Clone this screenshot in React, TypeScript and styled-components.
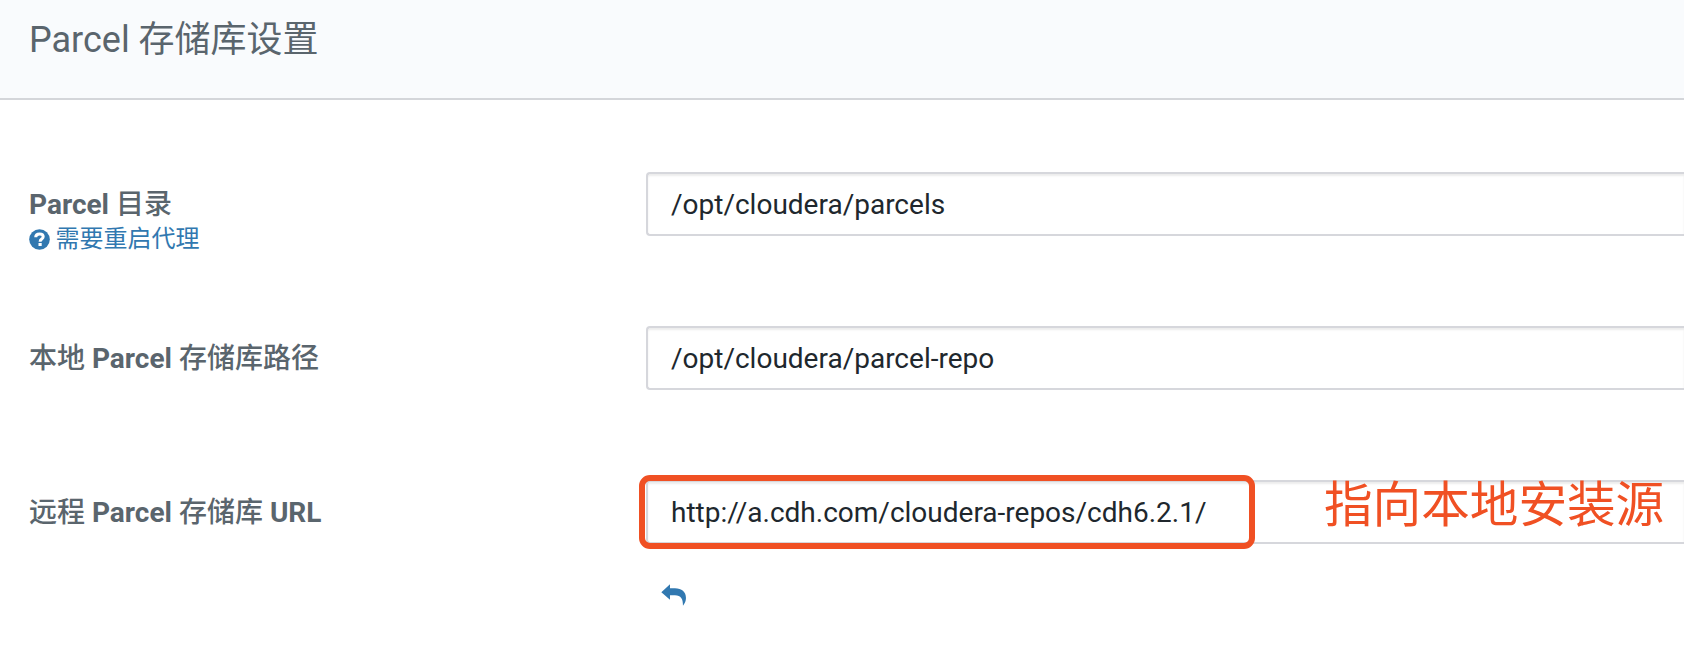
import React from "react";
import styled, { createGlobalStyle } from "styled-components";

const GlobalStyle = createGlobalStyle`
  * { box-sizing: border-box; }
  body {
    margin: 0;
    background: #fff;
    font-family: Roboto, "Noto Sans CJK SC", sans-serif;
    overflow: hidden;
  }
`;

const Page = styled.main`
  height: 648px;
  overflow: hidden;
`;

const Header = styled.header`
  height: 100px;
  padding: 18px 29px 0;
  background: #f9fbfd;
  border-bottom: 2px solid #d4d6da;
`;

const Title = styled.h1`
  margin: 0;
  font-size: 36px;
  line-height: 44px;
  font-weight: 400;
  color: #5a656d;
`;

const Settings = styled.section`
  display: grid;
  grid-auto-rows: 154px;
  padding-top: 72px;
`;

const Row = styled.div`
  display: grid;
  grid-template-columns: 617px 1fr;
  padding-left: 29px;
`;

const LabelCell = styled.div`
  padding-top: 16px;
`;

const Label = styled.label`
  display: block;
  font-size: 28px;
  line-height: 34px;
  font-weight: 700;
  color: #5a656d;
`;

const Cjk = styled.span`
  font-weight: 500;
`;

const Hint = styled.a`
  display: flex;
  align-items: center;
  gap: 5.5px;
  font-size: 24px;
  line-height: 35px;
  color: #3178b0;
`;

const FieldCell = styled.div`
  position: relative;
`;

const Field = styled.div`
  height: 64px;
  padding: 0 23px;
  border: 2px solid #d6d7dc;
  border-right: 0;
  border-radius: 4px 0 0 4px;
  box-shadow: inset 0 2px 2px rgba(0, 0, 0, 0.075);
  font-size: 28px;
  line-height: 62px;
  color: #20272d;
`;

const Highlight = styled.div`
  position: absolute;
  left: -7.5px;
  top: -5px;
  width: 616px;
  height: 74px;
  border: 6px solid #f05023;
  border-radius: 11px;
`;

const Note = styled.div`
  position: absolute;
  left: 678px;
  top: -9px;
  font-size: 48.6px;
  line-height: 70px;
  white-space: nowrap;
  color: #f05023;
`;

const ResetButton = styled.a`
  display: flex;
  padding: 40px 0 0 14.5px;
`;

const HelpIcon = () => (
  <svg width="21" height="21" viewBox="0 0 21 21">
    <circle cx="10.5" cy="10.5" r="10.3" fill="#3178b0" />
    <path
      d="M6.7 8.2C6.7 5.8 8.3 4.9 10.6 4.9S14.2 6 14.2 7.7C14.2 10.1 11.1 10 11.1 12.7"
      fill="none"
      stroke="#fff"
      strokeWidth="3"
    />
    <rect x="9.5" y="14" width="3.2" height="3" fill="#fff" />
  </svg>
);

const UndoIcon = () => (
  <svg width="25.3" height="22" viewBox="0 0 76 66">
    <path
      d="M1 25L27 1V13H42C62 13 75 24 75 42C75 50 72 58 66 65C66 44 60 35 42 34H27V47Z"
      fill="#3178b0"
    />
  </svg>
);

export default function App() {
  return (
    <Page>
      <GlobalStyle />
      <Header>
        <Title>Parcel 存储库设置</Title>
      </Header>
      <Settings>
        <Row>
          <LabelCell>
            <Label>Parcel <Cjk>目录</Cjk></Label>
            <Hint><HelpIcon />需要重启代理</Hint>
          </LabelCell>
          <FieldCell>
            <Field>/opt/cloudera/parcels</Field>
          </FieldCell>
        </Row>
        <Row>
          <LabelCell>
            <Label><Cjk>本地</Cjk> Parcel <Cjk>存储库路径</Cjk></Label>
          </LabelCell>
          <FieldCell>
            <Field>/opt/cloudera/parcel-repo</Field>
          </FieldCell>
        </Row>
        <Row>
          <LabelCell>
            <Label><Cjk>远程</Cjk> Parcel <Cjk>存储库</Cjk> URL</Label>
          </LabelCell>
          <FieldCell>
            <Field>http://a.cdh.com/cloudera-repos/cdh6.2.1/</Field>
            <Highlight />
            <Note>指向本地安装源</Note>
            <ResetButton><UndoIcon /></ResetButton>
          </FieldCell>
        </Row>
      </Settings>
    </Page>
  );
}
